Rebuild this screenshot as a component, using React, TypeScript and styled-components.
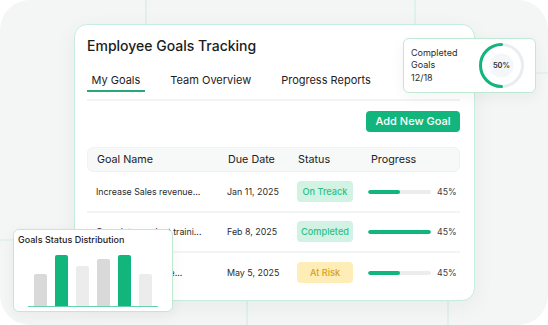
import React from 'react'
import styled, { createGlobalStyle } from 'styled-components'

const GlobalStyle = createGlobalStyle`
    * {
        box-sizing: border-box;
    }
    html,
    body {
        margin: 0;
        padding: 0;
        background: #ffffff;
        font-family: Inter, 'Noto Sans', 'Liberation Sans', sans-serif;
        -webkit-font-smoothing: antialiased;
    }
`

const Stage = styled.div`
    position: relative;
    width: 548px;
    height: 325px;
    overflow: hidden;
    background: #f4f6f5;
    border-radius: 30px;
    padding: 24px 0 0 74px;
`

const GridLines = styled.svg`
    position: absolute;
    inset: 0;
    pointer-events: none;
`

const MainCard = styled.section`
    position: relative;
    width: 401px;
    height: 277px;
    background: #ffffff;
    border: 1px solid #c6ecdb;
    border-radius: 13px;
    box-shadow: 0 6px 22px rgba(20, 40, 30, 0.05);
    padding: 12px 14px 0 12px;
    display: flex;
    flex-direction: column;
`

const Title = styled.h1`
    margin: 0;
    font-size: 14px;
    line-height: 18px;
    font-weight: 500;
    color: #1b1c1d;
`

const TabBar = styled.nav`
    display: flex;
    gap: 21px;
    margin-top: 18px;
`

const Tab = styled.div<{ $active?: boolean }>`
    padding: 0 4.5px 3px;
    font-size: 11px;
    line-height: 14px;
    color: #1f2021;
    border-bottom: 2px solid ${({ $active }) => ($active ? '#27a97b' : 'transparent')};
`

const Divider = styled.div`
    height: 2px;
    background: #f2f3f3;
    margin-top: 7px;
`

const Toolbar = styled.div`
    display: flex;
    justify-content: flex-end;
    margin-top: 10px;
`

const PrimaryButton = styled.button`
    height: 20.5px;
    padding: 0 9.5px;
    border: none;
    border-radius: 4px;
    background: #12b67c;
    color: #ffffff;
    font-family: inherit;
    font-size: 11px;
    font-weight: 500;
    line-height: 20px;
`

const Table = styled.div`
    margin-top: 15px;
`

const HeaderRow = styled.div`
    display: grid;
    grid-template-columns: 131px 70px 71px 1fr;
    align-items: center;
    height: 25px;
    padding-left: 9px;
    background: #f7f8f8;
    border: 1px solid #f1f2f2;
    border-radius: 6px;
    font-size: 10.75px;
    color: #202122;
`

const HeaderCell = styled.div<{ $shift?: number }>`
    padding-left: ${({ $shift }) => $shift ?? 0}px;
`

const Body = styled.div`
    margin-top: 1px;
`

const Row = styled.div`
    display: grid;
    grid-template-columns: 131px 70px 71px 1fr;
    align-items: center;
    height: 40px;
    padding-left: 9px;
    border-bottom: 2px solid #f3f4f4;

    &:last-child {
        border-bottom: none;
    }
`

const GoalName = styled.div`
    font-size: 8.8px;
    color: #2b2c2d;
    white-space: nowrap;
`

const DateCell = styled.div`
    font-size: 8.9px;
    color: #2b2c2d;
`

const Pill = styled.div<{ $tone: 'green' | 'amber' }>`
    width: 56px;
    height: 21.5px;
    border-radius: 4px;
    display: flex;
    align-items: center;
    justify-content: center;
    font-size: 9.2px;
    font-weight: 500;
    background: ${({ $tone }) => ($tone === 'green' ? '#d2f2e3' : '#feedb7')};
    color: ${({ $tone }) => ($tone === 'green' ? '#2cc088' : '#d6a11d')};
`

const ProgressCell = styled.div`
    display: flex;
    align-items: center;
    gap: 6px;
`

const Track = styled.div`
    width: 63px;
    height: 4px;
    border-radius: 2px;
    background: #ececec;
    overflow: hidden;
`

const Fill = styled.div`
    height: 100%;
    border-radius: 2px;
    background: #12b67c;
`

const Percent = styled.span`
    font-size: 8.8px;
    color: #3d3e3f;
`

const FloatCard = styled.div`
    position: absolute;
    background: #ffffff;
    border: 1px solid #bfe9d5;
    border-radius: 6px;
    box-shadow: 0 4px 14px rgba(20, 40, 30, 0.05);
`

const CompletedCard = styled(FloatCard)`
    left: 403px;
    top: 38px;
    width: 133px;
    height: 55px;
    display: flex;
    align-items: center;
    justify-content: space-between;
    padding: 0 11px 0 7px;
`

const StatText = styled.div`
    font-size: 9px;
    line-height: 12.5px;
    color: #2a2b2c;
`

const Donut = styled.div`
    position: relative;
    width: 45px;
    height: 45px;
`

const DonutLabel = styled.span`
    position: absolute;
    inset: 0;
    display: flex;
    align-items: center;
    justify-content: center;
    font-size: 7.5px;
    font-weight: 600;
    color: #2d2e2f;
`

const ChartCard = styled(FloatCard)`
    left: 13px;
    top: 229px;
    width: 160px;
    height: 83px;
    padding: 4px 14px 0 4px;
    display: flex;
    flex-direction: column;
`

const ChartTitle = styled.div`
    font-size: 9px;
    line-height: 12px;
    font-weight: 500;
    color: #1f2021;
`

const Bars = styled.div`
    flex: 1;
    margin: 0 0 4.5px 10px;
    padding: 0 5px 0 6px;
    display: flex;
    align-items: flex-end;
    gap: 8.5px;
    border-bottom: 1px solid #66d1aa;
`

const Bar = styled.div<{ $tone: 'green' | 'mid' | 'light' }>`
    width: 12.5px;
    border-radius: 2px 2px 0 0;
    background: ${({ $tone }) =>
        $tone === 'green' ? '#12b67c' : $tone === 'mid' ? '#d9d9d9' : '#ececec'};
`

const goals = [
    { name: 'Increase Sales revenue...', date: 'Jan 11, 2025', status: 'On Treack', tone: 'green', fill: 51 },
    { name: 'Complete product traini...', date: 'Feb 8, 2025', status: 'Completed', tone: 'green', fill: 100 },
    { name: 'Launch new marke...', date: 'May 5, 2025', status: 'At Risk', tone: 'amber', fill: 51 },
] as const

const bars = [
    { h: 32, tone: 'mid' },
    { h: 51, tone: 'green' },
    { h: 40, tone: 'light' },
    { h: 47, tone: 'mid' },
    { h: 51, tone: 'green' },
    { h: 32, tone: 'light' },
] as const

export default function App() {
    return (
        <>
            <GlobalStyle />
            <Stage>
                <GridLines width="548" height="325" viewBox="0 0 548 325">
                    <g stroke="#d3eee3" strokeWidth="1.2">
                        <line x1="146" y1="0" x2="146" y2="24" />
                        <line x1="415" y1="0" x2="415" y2="24" />
                        <line x1="536" y1="73" x2="548" y2="73" />
                        <line x1="0" y1="240" x2="13" y2="240" />
                        <line x1="247" y1="301" x2="247" y2="325" />
                        <line x1="448" y1="301" x2="448" y2="325" />
                    </g>
                </GridLines>

                <MainCard>
                    <Title>Employee Goals Tracking</Title>
                    <TabBar>
                        <Tab $active>My Goals</Tab>
                        <Tab>Team Overview</Tab>
                        <Tab>Progress Reports</Tab>
                    </TabBar>
                    <Divider />
                    <Toolbar>
                        <PrimaryButton>Add New Goal</PrimaryButton>
                    </Toolbar>
                    <Table>
                        <HeaderRow>
                            <HeaderCell>Goal Name</HeaderCell>
                            <HeaderCell>Due Date</HeaderCell>
                            <HeaderCell>Status</HeaderCell>
                            <HeaderCell $shift={2}>Progress</HeaderCell>
                        </HeaderRow>
                        <Body>
                            {goals.map((g) => (
                                <Row key={g.name}>
                                    <GoalName>{g.name}</GoalName>
                                    <DateCell>{g.date}</DateCell>
                                    <div>
                                        <Pill $tone={g.tone}>{g.status}</Pill>
                                    </div>
                                    <ProgressCell>
                                        <Track>
                                            <Fill style={{ width: `${g.fill}%` }} />
                                        </Track>
                                        <Percent>45%</Percent>
                                    </ProgressCell>
                                </Row>
                            ))}
                        </Body>
                    </Table>
                </MainCard>

                <CompletedCard>
                    <StatText>
                        Completed
                        <br />
                        Goals
                        <br />
                        12/18
                    </StatText>
                    <Donut>
                        <svg width="45" height="45" viewBox="0 0 45 45">
                            <circle cx="22.5" cy="22.5" r="21" fill="none" stroke="#e9edf0" strokeWidth="3" />
                            <circle cx="22.5" cy="22.5" r="12" fill="#f4f6f7" />
                            <path
                                d="M 22.5 1.5 A 21 21 0 0 0 22.5 43.5"
                                fill="none"
                                stroke="#12b67c"
                                strokeWidth="3"
                                strokeLinecap="round"
                            />
                        </svg>
                        <DonutLabel>50%</DonutLabel>
                    </Donut>
                </CompletedCard>

                <ChartCard>
                    <ChartTitle>Goals Status Distribution</ChartTitle>
                    <Bars>
                        {bars.map((b, i) => (
                            <Bar key={i} $tone={b.tone} style={{ height: b.h }} />
                        ))}
                    </Bars>
                </ChartCard>
            </Stage>
        </>
    )
}
